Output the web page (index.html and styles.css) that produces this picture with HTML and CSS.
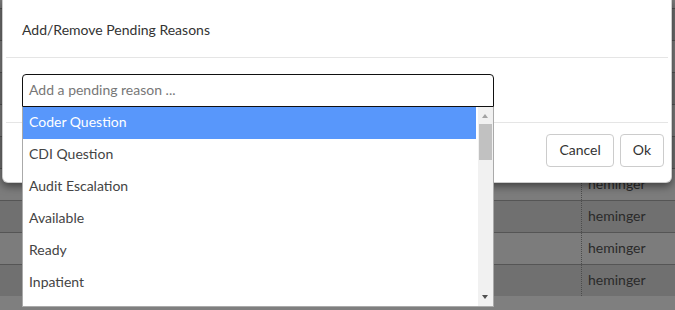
FILE: index.html
```html
<!DOCTYPE html>
<html>
<head>
<meta charset="utf-8">
<title>Pending Reasons</title>
<link rel="stylesheet" href="styles.css">
</head>
<body>
<div class="grid">
  <div class="row top"></div>
  <div class="row"><div class="c"></div><div class="c"></div><div class="c"></div><div class="c"></div><div class="c last">heminger</div></div>
  <div class="row"><div class="c"></div><div class="c"></div><div class="c"></div><div class="c"></div><div class="c last">heminger</div></div>
  <div class="row"><div class="c"></div><div class="c"></div><div class="c"></div><div class="c"></div><div class="c last">heminger</div></div>
  <div class="row"><div class="c"></div><div class="c"></div><div class="c"></div><div class="c"></div><div class="c last">heminger</div></div>
  <div class="row"><div class="c"></div><div class="c"></div><div class="c"></div><div class="c"></div><div class="c last">heminger</div></div>
  <div class="row"><div class="c"></div><div class="c"></div><div class="c"></div><div class="c"></div><div class="c last">heminger</div></div>
  <div class="row"><div class="c"></div><div class="c"></div><div class="c"></div><div class="c"></div><div class="c last">heminger</div></div>
  <div class="row"><div class="c"></div><div class="c"></div><div class="c"></div><div class="c"></div><div class="c last">heminger</div></div>
  <div class="row"><div class="c"></div><div class="c"></div><div class="c"></div><div class="c">(None)</div><div class="c last">heminger</div></div>
</div>
<div class="backdrop"></div>

<div class="modal">
  <div class="modal-header">Add/Remove Pending Reasons</div>
  <div class="modal-body">
    <div class="input">Add a pending reason ...</div>
  </div>
  <div class="modal-footer">
    <button class="btn">Cancel</button>
    <button class="btn">Ok</button>
  </div>
</div>

<div class="dropdown">
  <ul class="options">
    <li class="opt active">Coder Question</li>
    <li class="opt">CDI Question</li>
    <li class="opt">Audit Escalation</li>
    <li class="opt">Available</li>
    <li class="opt">Ready</li>
    <li class="opt">Inpatient</li>
  </ul>
  <div class="scrollbar">
    <div class="arrow up"></div>
    <div class="thumb"></div>
    <div class="arrow down"></div>
  </div>
</div>
</body>
</html>
```

FILE: styles.css
```css
* { box-sizing: border-box; }
html, body { margin: 0; padding: 0; }
body {
  width: 675px;
  height: 310px;
  overflow: hidden;
  font-family: Lato, "Open Sans", sans-serif;
  font-size: 14px;
  color: #333;
  background: #fff;
  position: relative;
}

/* background table */
.grid { display: flex; flex-direction: column; }
.row {
  display: grid;
  grid-template-columns: 75px 143px 157px 206px 94px;
  height: 32px;
  border-top: 1px solid #aaa;
  background: #e0e0e0;
}
.row:nth-child(odd) { background: #f8f8f8; }
.row.top { height: 8px; border-top: none; background: #f8f8f8; }
.c {
  border-left: 1px solid #bbb;
  padding: 0 6px;
  line-height: 29px;
  color: #555;
  white-space: nowrap;
  overflow: hidden;
}
.c:first-child { border-left: none; }
.c.last { border-left: 1px dotted #999; }

.backdrop {
  position: absolute;
  inset: 0;
  background: rgba(0, 0, 0, 0.5);
}

/* modal */
.modal {
  position: absolute;
  left: 2px;
  top: -1px;
  width: 670px;
  background: #fff;
  border: 1px solid rgba(0, 0, 0, 0.2);
  border-radius: 0 0 6px 6px;
  box-shadow: 0 3px 9px rgba(0, 0, 0, 0.5);
}
.modal-header {
  margin: 0 3px;
  padding: 20px 15px 17px 16px;
  line-height: 20px;
  border-bottom: 1px solid #e5e5e5;
  color: #333;
}
.modal-body {
  margin: 0 3px;
  padding: 16px 16px 15px;
}
.input {
  width: 472px;
  height: 33px;
  border: 1px solid #111;
  border-radius: 4px 4px 0 0;
  padding: 0 6px 2px;
  line-height: 29px;
  color: #777;
}
.modal-footer {
  margin: 0 3px;
  border-top: 1px solid #e5e5e5;
  padding: 11px 4px 15px;
  display: flex;
  justify-content: flex-end;
  gap: 6px;
}
.btn {
  height: 33px;
  padding: 0 12px 2px;
  font: inherit;
  line-height: 29px;
  color: #333;
  background: #fff;
  border: 1px solid #ccc;
  border-radius: 4px;
}

/* dropdown list */
.dropdown {
  position: absolute;
  left: 22px;
  top: 107px;
  width: 472px;
  height: 200px;
  background: #fff;
  border: 1px solid #aaa;
  border-top: none;
  overflow: hidden;
}
.options {
  list-style: none;
  margin: 0;
  padding: 0;
  width: 453px;
}
.opt {
  height: 32px;
  line-height: 30px;
  padding: 0 6px 2px;
  color: #444;
}
.opt.active { background: #5897fb; color: #fff; }

.scrollbar {
  position: absolute;
  top: 0;
  right: 0;
  bottom: 0;
  width: 15px;
  background: #f1f1f1;
}
.thumb {
  position: absolute;
  left: 1px;
  right: 1px;
  top: 17px;
  height: 36px;
  background: #c1c1c1;
}
.arrow {
  position: absolute;
  left: 4px;
  width: 0;
  height: 0;
  border-left: 3.5px solid transparent;
  border-right: 3.5px solid transparent;
}
.arrow.up { top: 7px; border-bottom: 4px solid #a3a3a3; }
.arrow.down { bottom: 7px; border-top: 4px solid #505050; }
```
